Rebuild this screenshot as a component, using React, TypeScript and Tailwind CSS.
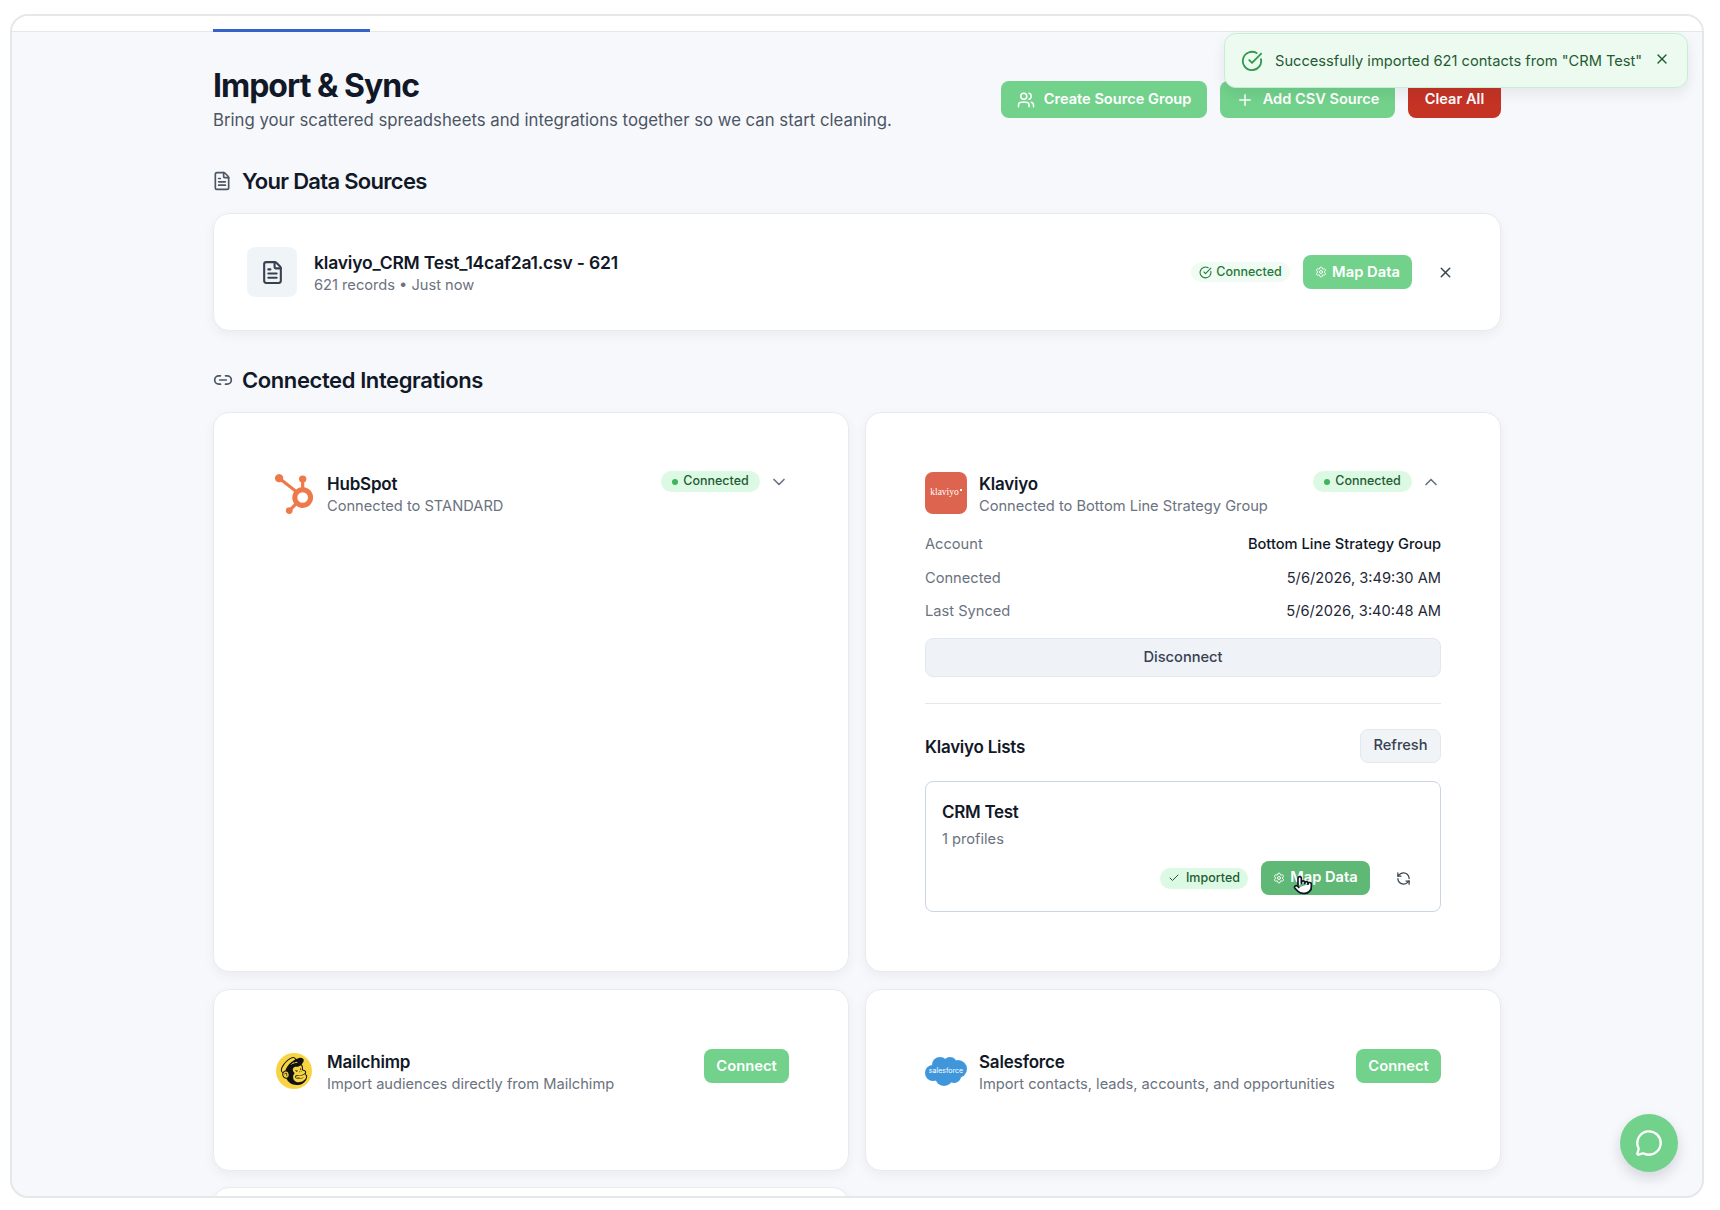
import React from "react"
import { Check, ChevronDown, ChevronUp, CircleCheckBig, FileText, Link2, MessageCircle, Plus, Pointer, RefreshCcw, Settings, Users, X } from "lucide-react"
import { SiHubspot, SiMailchimp } from "react-icons/si"

const greenBtn = "flex items-center justify-center rounded-lg bg-[#72d28b] text-white font-semibold"

function ConnectedPill() {
  return (
    <span className="flex h-[21px] w-[99px] items-center justify-center gap-[5px] rounded-full bg-[#dcf9e3] text-[12.5px] font-medium text-[#1f5c33]">
      <span className="h-[6px] w-[6px] rounded-full bg-[#3eb55c]" />
      Connected
    </span>
  )
}

function CardHead({ logo, name, sub, right }: { logo: React.ReactNode; name: string; sub: string; right: React.ReactNode }) {
  return (
    <div className="flex items-start justify-between">
      <div className="flex gap-[12px]">
        <div className="flex h-[42px] w-[42px] items-center justify-center">{logo}</div>
        <div>
          <div className="text-[17px] leading-[24px] font-semibold tracking-[-0.2px] text-[#111827]">{name}</div>
          <div className="text-[14.65px] leading-[20px] text-[#6b7280]">{sub}</div>
        </div>
      </div>
      {right}
    </div>
  )
}

function Row({ label, value, strong }: { label: string; value: string; strong?: boolean }) {
  return (
    <div className="flex justify-between text-[14.65px] leading-[20px]">
      <span className="text-[#6b7280]">{label}</span>
      <span className={strong ? "font-medium text-[#111827]" : "text-[#1f2937]"}>{value}</span>
    </div>
  )
}

const cardCls = "rounded-2xl border border-[#e8eaef] bg-white shadow-[0_4px_12px_rgba(15,23,42,0.05)]"

export default function App() {
  return (
    <div className="h-[1210px] w-[1720px] bg-white pt-[14px] pl-[10px] font-['Inter',sans-serif]">
      <div className="relative flex h-[1184px] w-[1694px] flex-col overflow-hidden rounded-[18px] border-2 border-[#e5e7eb] bg-[#f7f8fc]">
        <div className="flex h-[16px] shrink-0 items-end border-b border-[#e5e7eb] bg-white">
          <div className="ml-[201px] -mb-px h-[3px] w-[157px] bg-[#3563c9]" />
        </div>

        <div className="ml-[201px] w-[1288px]">
          <div className="flex items-start justify-between pt-[34px]">
            <div>
              <h1 className="text-[32px] leading-[40px] font-bold tracking-[-1px] text-[#111827]">Import &amp; Sync</h1>
              <p className="text-[16.75px] leading-[28px] text-[#4b5563]">Bring your scattered spreadsheets and integrations together so we can start cleaning.</p>
            </div>
            <div className="mt-[15px] flex gap-[13px] text-[14.6px]">
              <button className={`${greenBtn} h-[37px] w-[206px] gap-[9px] pt-px`}>
                <Users size={18} />
                Create Source Group
              </button>
              <button className={`${greenBtn} h-[37px] w-[175px] gap-[9px] pt-px`}>
                <Plus size={18} />
                Add CSV Source
              </button>
              <button className="h-[37px] w-[93px] rounded-lg bg-[#c53325] pt-px font-semibold text-white">Clear All</button>
            </div>
          </div>

          <div className="mt-[31px] flex h-[32px] items-center gap-[10px]">
            <FileText size={20} className="-ml-px text-[#4b5563]" />
            <h2 className="text-[22px] font-semibold tracking-[-0.7px] text-[#111827]">Your Data Sources</h2>
          </div>

          <div className={`${cardCls} mt-[16px] flex h-[118px] items-center pl-[33px] pr-[46px]`}>
            <div className="flex h-[50px] w-[50px] items-center justify-center rounded-lg bg-[#f1f4f6]">
              <FileText size={25} className="text-[#374151]" />
            </div>
            <div className="ml-[17px] grow pt-[1px]">
              <div className="text-[17.5px] leading-[24px] font-semibold tracking-[-0.2px] text-[#111827]">klaviyo_CRM Test_14caf2a1.csv - 621</div>
              <div className="text-[14.65px] leading-[20px] text-[#6b7280]">621 records • Just now</div>
            </div>
            <span className="flex h-[20px] w-[99px] items-center justify-center gap-[4px] rounded-full bg-[#f0fbf3] text-[12.5px] font-medium text-[#1f7a3a]">
              <CircleCheckBig size={13} />
              Connected
            </span>
            <button className={`${greenBtn} ml-[13px] h-[34px] w-[109px] gap-[5px] text-[14.75px]`}>
              <Settings size={12} />
              Map Data
            </button>
            <X size={17} className="ml-[25px] text-[#374151]" />
          </div>

          <div className="mt-[33px] flex h-[32px] items-center gap-[9px]">
            <Link2 size={20} className="text-[#4b5563]" />
            <h2 className="text-[22px] font-semibold tracking-[-0.4px] text-[#111827]">Connected Integrations</h2>
          </div>

          <div className="mt-[16px] grid grid-cols-2 gap-x-[16px]">
            <div className={`${cardCls} h-[560px] px-[59px] pt-[59px]`}>
              <CardHead
                logo={<SiHubspot size={40} className="mt-[1px] text-[#ee7a4b]" />}
                name="HubSpot"
                sub="Connected to STANDARD"
                right={
                  <div className="-mt-px flex items-center gap-[9px]">
                    <ConnectedPill />
                    <ChevronDown size={20} className="text-[#6b7280]" />
                  </div>
                }
              />
            </div>

            <div className={`${cardCls} h-[560px] px-[59px] pt-[59px]`}>
              <CardHead
                logo={
                  <div className="flex h-[42px] w-[42px] items-start justify-center gap-px rounded-lg bg-[#dd644e] pt-[15px] font-['Liberation_Serif',serif] text-[9.5px] leading-[11px] text-white">
                    klaviyo
                    <span className="mt-[2px] h-[2px] w-[2px] bg-white" />
                  </div>
                }
                name="Klaviyo"
                sub="Connected to Bottom Line Strategy Group"
                right={
                  <div className="-mt-px flex items-center gap-[9px]">
                    <ConnectedPill />
                    <ChevronUp size={20} className="text-[#6b7280]" />
                  </div>
                }
              />
              <div className="mt-[18px] flex flex-col gap-[13.5px]">
                <Row label="Account" value="Bottom Line Strategy Group" strong />
                <Row label="Connected" value="5/6/2026, 3:49:30 AM" />
                <Row label="Last Synced" value="5/6/2026, 3:40:48 AM" />
              </div>
              <button className="mt-[17px] h-[39px] w-full rounded-lg border border-[#e2e8f0] bg-[#eff2f6] text-[14.65px] font-medium text-[#374151]">Disconnect</button>
              <div className="mt-[26px] h-px bg-[#e5e7eb]" />
              <div className="mt-[25px] flex items-center justify-between">
                <span className="pt-[3px] text-[17px] font-semibold tracking-[-0.25px] text-[#111827]">Klaviyo Lists</span>
                <button className="h-[34px] w-[81px] rounded-lg border border-[#e2e8f0] bg-[#f1f4f7] text-[14.65px] font-medium text-[#374151]">Refresh</button>
              </div>
              <div className="relative mt-[18px] h-[131px] rounded-lg border border-[#cbd5e1] px-[16px] pt-[18px]">
                <div className="text-[17px] leading-[24px] font-semibold tracking-[-0.3px] text-[#111827]">CRM Test</div>
                <div className="mt-[5px] text-[14.65px] leading-[20px] text-[#6b7280]">1 profiles</div>
                <div className="mt-[12px] flex items-center justify-end pr-[13px]">
                  <span className="flex h-[21px] w-[88px] items-center justify-center gap-[6px] rounded-full bg-[#dcf9e3] text-[12.5px] font-medium text-[#1f5c33]">
                    <Check size={12} />
                    Imported
                  </span>
                  <button className="ml-[13px] flex h-[34px] w-[109px] items-center justify-center gap-[5px] rounded-lg bg-[#5fb876] text-[14.65px] font-semibold text-white">
                    <Settings size={12} />
                    Map Data
                  </button>
                  <RefreshCcw size={15} className="ml-[26px] text-[#374151]" />
                </div>
                <Pointer size={20} className="absolute top-[93px] left-[367px] fill-white text-[#111827]" />
              </div>
            </div>
          </div>

          <div className="mt-[17px] grid grid-cols-2 gap-x-[16px] gap-y-[16px]">
            <div className={`${cardCls} h-[182px] px-[59px] pt-[60px]`}>
              <CardHead
                logo={
                  <div className="flex h-[36px] w-[36px] items-center justify-center rounded-full bg-[#f7d542]">
                    <SiMailchimp size={28} className="text-[#111111]" />
                  </div>
                }
                name="Mailchimp"
                sub="Import audiences directly from Mailchimp"
                right={<button className={`${greenBtn} -mt-px h-[34px] w-[85px] text-[14.75px]`}>Connect</button>}
              />
            </div>

            <div className={`${cardCls} h-[182px] px-[59px] pt-[60px]`}>
              <CardHead
                logo={
                  <svg viewBox="0 0 42 30" className="h-[30px] w-[42px]">
                    <g fill="#3f96db">
                      <circle cx="15" cy="9" r="8" />
                      <circle cx="25" cy="8" r="7" />
                      <circle cx="33" cy="13" r="9" />
                      <circle cx="8" cy="17" r="8" />
                      <circle cx="19" cy="21" r="9" />
                      <circle cx="29" cy="20" r="7" />
                    </g>
                    <text x="21" y="17" textAnchor="middle" fontSize="7" fill="#ffffff" fontFamily="Inter, sans-serif">salesforce</text>
                  </svg>
                }
                name="Salesforce"
                sub="Import contacts, leads, accounts, and opportunities"
                right={<button className={`${greenBtn} -mt-px h-[34px] w-[85px] text-[14.75px]`}>Connect</button>}
              />
            </div>

            <div className={`${cardCls} h-[180px]`} />
          </div>
        </div>

        <div className="absolute top-[17px] right-[14px] flex h-[55px] w-[464px] items-center rounded-xl border border-[#c5efd0] bg-[#edfaf0] pl-[16px] shadow-[0_6px_14px_rgba(15,23,42,0.08)]">
          <CircleCheckBig size={22} className="text-[#2f9a4c]" />
          <span className="mt-[2px] ml-[12px] text-[14.65px] text-[#1f5c33]">Successfully imported 621 contacts from "CRM Test"</span>
          <X size={16} className="absolute top-[17px] right-[17px] text-[#1f5c33]" />
        </div>

        <div className="absolute right-[24px] bottom-[24px] flex h-[58px] w-[58px] items-center justify-center rounded-full bg-[#72d28b] shadow-[0_6px_14px_rgba(15,23,42,0.15)]">
          <MessageCircle size={28} className="text-white" />
        </div>
      </div>
    </div>
  )
}
